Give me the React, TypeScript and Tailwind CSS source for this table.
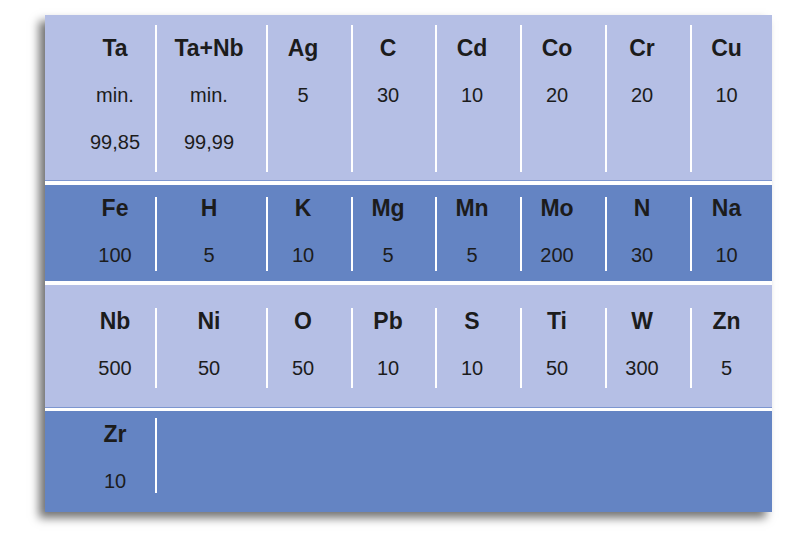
import React from 'react';

type Row = {
  cells: string[][];
  bg: string;
  box: string; // height + padding (separator extent)
  text: string; // offset + gap of the text stack
};

// column paddings keep the text centred where the print has it
const cols = [
  'pl-[30px] pr-0 border-r-2',
  'pl-0 pr-[5px] border-r-2',
  'pl-0 pr-[13px] border-r-2',
  'pl-0 pr-[12px] border-r-2',
  'pl-0 pr-[13px] border-r-2',
  'pl-0 pr-[13px] border-r-2',
  'pl-0 pr-[13px] border-r-2',
  'pl-0 pr-[11px]',
];

const rows: Row[] = [
  {
    cells: [
      ['Ta', 'min.', '99,85'],
      ['Ta+Nb', 'min.', '99,99'],
      ['Ag', '5'],
      ['C', '30'],
      ['Cd', '10'],
      ['Co', '20'],
      ['Cr', '20'],
      ['Cu', '10'],
    ],
    bg: 'bg-[#b5bfe5]',
    box: 'h-[165px] pt-[10px] pb-[8px]',
    text: 'mt-[11px] gap-[23px]',
  },
  {
    cells: [
      ['Fe', '100'],
      ['H', '5'],
      ['K', '10'],
      ['Mg', '5'],
      ['Mn', '5'],
      ['Mo', '200'],
      ['N', '30'],
      ['Na', '10'],
    ],
    bg: 'bg-[#6484c3]',
    box: 'h-[96px] pt-[12px] pb-[10px]',
    text: '-mt-[1px] gap-[23px]',
  },
  {
    cells: [
      ['Nb', '500'],
      ['Ni', '50'],
      ['O', '50'],
      ['Pb', '10'],
      ['S', '10'],
      ['Ti', '50'],
      ['W', '300'],
      ['Zn', '5'],
    ],
    bg: 'bg-[#b5bfe5]',
    box: 'h-[122px] pt-[23px] pb-[19px]',
    text: 'mt-[1px] gap-[23px]',
  },
  {
    cells: [['Zr', '10']],
    bg: 'bg-[#6484c3]',
    box: 'h-[101px] pt-[7px] pb-[20px]',
    text: 'mt-[4px] gap-[23px]',
  },
];

function TableRow({ row }: { row: Row }) {
  return (
    <div
      className={`grid grid-cols-[112px_111px_85px_84px_85px_85px_85px_80px] ${row.bg} ${row.box}`}
    >
      {row.cells.map((cell, i) => (
        <div key={i} className={`border-white ${cols[i]}`}>
          <div className={`flex flex-col items-center ${row.text}`}>
            {cell.map((t, j) => (
              <span
                key={j}
                className={
                  j === 0
                    ? 'text-[23px] leading-[24px] font-bold'
                    : 'text-[20px] leading-[24px]'
                }
              >
                {t}
              </span>
            ))}
          </div>
        </div>
      ))}
    </div>
  );
}

export default function App() {
  return (
    <div className="w-[800px] h-[551px] bg-white pt-[15px] pl-[45px] font-['Liberation_Sans',Arial,sans-serif] text-[#1c1c1c]">
      <div className="w-[727px] flex flex-col bg-white shadow-[-6px_6px_9px_rgba(0,0,0,0.55)]">
        <TableRow row={rows[0]} />
        <div className="h-px bg-[#7d96d0]" />
        <div className="h-[4px] bg-white" />
        <TableRow row={rows[1]} />
        <div className="h-[4px] bg-white" />
        <TableRow row={rows[2]} />
        <div className="h-px bg-[#7d96d0]" />
        <div className="h-[3px] bg-white" />
        <TableRow row={rows[3]} />
      </div>
    </div>
  );
}
